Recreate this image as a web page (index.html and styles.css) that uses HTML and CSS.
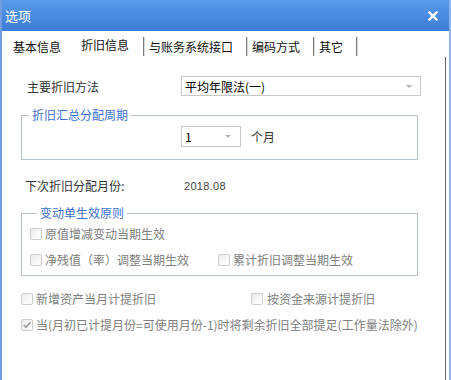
FILE: index.html
```html
<!DOCTYPE html>
<html lang="zh-CN">
<head>
    <meta charset="UTF-8">
    <title>选项</title>
    <link rel="stylesheet" href="styles.css">
</head>
<body>
<div class="window">
    <div class="titlebar">
        <span class="title">选项</span>
        <svg class="close" width="10" height="10" viewBox="0 0 10 10">
            <path d="M1.5 1.5 L8.5 8.5 M8.5 1.5 L1.5 8.5" stroke="#fff" stroke-width="2.4" stroke-linecap="square"/>
        </svg>
    </div>
    <div class="tabs">
        <span class="tab first">基本信息</span>
        <span class="tab active"><span class="raised">折旧信息</span></span>
        <span class="tab">与账务系统接口</span>
        <span class="tab">编码方式</span>
        <span class="tab">其它</span>
    </div>
    <div class="panel">
        <div class="row method">
            <label class="label">主要折旧方法</label>
            <div class="combo wide"><span>平均年限法(一)</span><i class="arrow"></i></div>
        </div>

        <fieldset class="group period">
            <legend>折旧汇总分配周期</legend>
            <div class="period-row">
                <div class="combo small"><span>1</span><i class="arrow"></i></div>
                <span class="unit">个月</span>
            </div>
        </fieldset>

        <div class="row next">
            <span class="label">下次折旧分配月份:</span>
            <span class="value">2018.08</span>
        </div>

        <fieldset class="group rules">
            <legend>变动单生效原则</legend>
            <div class="checks inner">
                <label class="check"><span class="box"></span>原值增减变动当期生效</label>
                <span></span>
                <label class="check"><span class="box"></span>净残值（率）调整当期生效</label>
                <label class="check"><span class="box"></span>累计折旧调整当期生效</label>
            </div>
        </fieldset>

        <div class="checks outer">
            <label class="check"><span class="box"></span>新增资产当月计提折旧</label>
            <label class="check"><span class="box"></span>按资金来源计提折旧</label>
        </div>
        <label class="check last"><span class="box">
            <svg width="10" height="10" viewBox="0 0 10 10"><path d="M1.8 5 L4 7.3 L8.3 2.4" fill="none" stroke="#9a9a9a" stroke-width="1.6"/></svg>
        </span>当(月初已计提月份=可使用月份-1)时将剩余折旧全部提足(工作量法除外)</label>
    </div>
</div>
</body>
</html>
```

FILE: styles.css
```css
body { margin: 0; background: #fff; font-family: "Noto Sans CJK SC", "Liberation Sans", sans-serif; font-size: 12px; color: #222; }
.window { width: 451px; height: 380px; box-sizing: border-box; border-left: 2px solid #6f9de0; border-right: 2px solid #8fb4e8; display: flex; flex-direction: column; overflow: hidden; background: #fff; }
.titlebar { height: 31px; flex: none; margin: 0 -2px; padding: 0 13px 0 5px; display: flex; align-items: center; justify-content: space-between; background: linear-gradient(#5a9aea, #3c7cd6); color: #fff; font-size: 13px; }
.title { line-height: 16px; }
.close { display: block; }
.tabs { height: 26px; flex: none; box-sizing: border-box; padding: 6px 0 0 11px; display: flex; color: #111; }
.tab { height: 19px; line-height: 19px; padding: 0 13px 0 5px; border-right: 1px solid #7c7c7c; box-shadow: 1px 0 0 #dadada; }
.tab.first { padding: 0 20px 0 0; border-right: none; box-shadow: none; }
.tab.active { padding: 0 14px 0 0; }
.raised { display: inline-block; transform: translateY(-2px); }
.panel { flex: 1; margin-right: 3px; border-right: 1px solid #6b6b6b; padding: 19px 0 0 19px; }
.row { display: flex; align-items: center; }
.method { padding-left: 6px; height: 20px; }
.method .label { width: 154px; color: #333; }
.combo { box-sizing: border-box; border: 1px solid #c8c8c8; background: #fff; display: flex; align-items: center; justify-content: space-between; color: #000; }
.combo.wide { width: 240px; height: 20px; padding: 0 8px 0 3px; }
.combo.small { width: 60px; height: 21px; padding: 0 9px 0 3px; }
.arrow { width: 0; height: 0; border-left: 3.5px solid transparent; border-right: 3.5px solid transparent; border-top: 3px solid #b4b4b4; }
.group { width: 397px; box-sizing: border-box; margin: 11px 0 0 0; border: 1px solid #b7c0cc; padding: 3px 0 12px 0; }
.group legend { margin-left: 7px; padding: 0 3px; line-height: 16px; color: #3b6fd0; }
.period-row { display: flex; align-items: center; padding-left: 159px; }
.unit { margin-left: 10px; color: #333; }
.next { margin-top: 18px; padding-left: 4px; line-height: 16px; }
.next .label { width: 159px; color: #333; }
.value { font-family: "Liberation Sans", sans-serif; font-size: 11px; color: #444; letter-spacing: 0.3px; }
.rules { padding: 5px 0 7px 8px; }
.checks { display: grid; row-gap: 10px; }
.checks.inner { grid-template-columns: 188px auto; }
.checks.outer { grid-template-columns: 230px auto; margin-top: 15px; }
.check { display: flex; align-items: center; line-height: 16px; color: #808080; white-space: nowrap; }
.box { width: 12px; height: 12px; box-sizing: border-box; margin-right: 3px; border: 1px solid #cdcdcd; border-radius: 2px; background: linear-gradient(135deg, #ececec, #fff); display: flex; align-items: center; justify-content: center; }
.checks.outer .check + .check .box { margin-right: 4px; }
.check.last { margin-top: 10px; }
```
